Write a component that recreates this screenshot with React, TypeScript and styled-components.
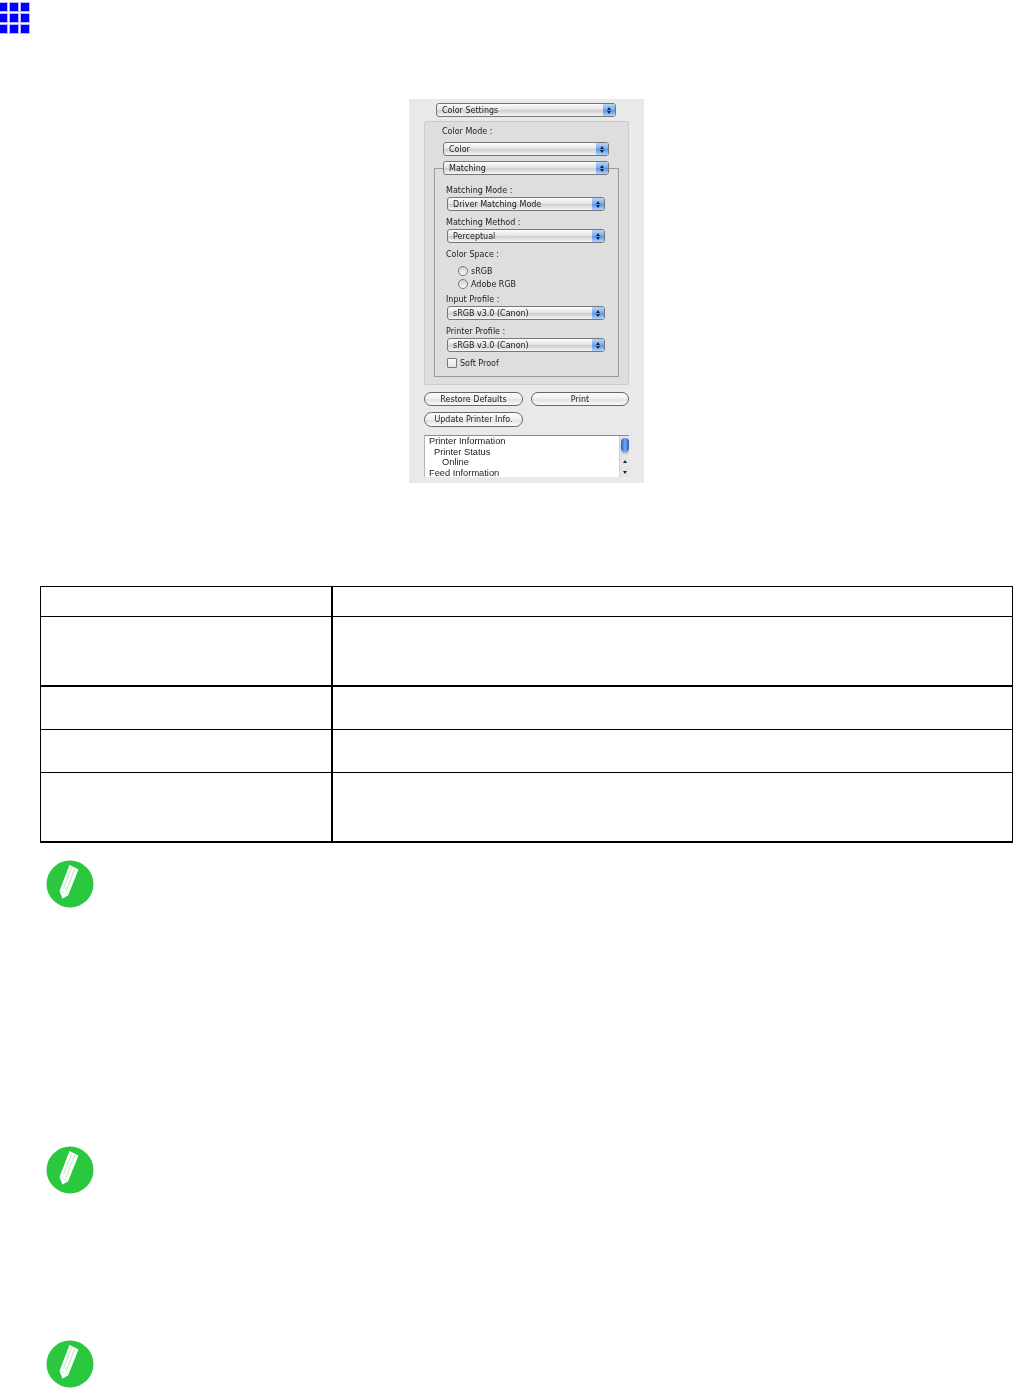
import React from "react"
import styled, { createGlobalStyle } from "styled-components"

const GlobalStyle = createGlobalStyle`
  html, body {
    margin: 0;
    padding: 0;
    background: #fff;
    font-family: "Liberation Sans", Arial, sans-serif;
  }
`

const Page = styled.main`
  width: 1013px;
  height: 1392px;
  overflow: hidden;
  padding-top: 3px;
  box-sizing: border-box;
`

const MenuGrid = styled.div`
  display: grid;
  grid-template-columns: repeat(3, 8px);
  grid-auto-rows: 8px;
  gap: 3px;
  width: 30px;
  margin-left: -1px;
`

const MenuDot = styled.span`
  background: #0000ff;
  box-shadow: 0 0 0 1px #b4b4ff;
`

const Panel = styled.section`
  width: 235px;
  height: 384px;
  box-sizing: border-box;
  margin: 66px 0 0 409px;
  padding-top: 4px;
  background: #e9e9e9;
  color: #222;
  font-family: "DejaVu Sans", sans-serif;
  font-size: 8px;
  filter: blur(0.35px);
`

const SelectBox = styled.div<{ $width: number; $left: number; $top?: number }>`
  display: flex;
  align-items: center;
  justify-content: space-between;
  position: relative;
  width: ${(p) => p.$width}px;
  height: 14px;
  box-sizing: border-box;
  margin: ${(p) => p.$top ?? 1}px 0 0 ${(p) => p.$left}px;
  padding-left: 5px;
  border: 1px solid #777;
  border-radius: 3px;
  background: linear-gradient(#fdfdfd, #e4e4e4 45%, #cfcfcf 55%, #f6f6f6);
  overflow: hidden;
`

const SelectText = styled.span`
  padding-top: 1px;
`

const SelectArrows = styled.span`
  display: flex;
  flex-direction: column;
  align-items: center;
  justify-content: center;
  gap: 1px;
  width: 12px;
  height: 100%;
  background: linear-gradient(#b7d5f7, #73a9ec 50%, #5a97e6 55%, #b3d3f7);
`

const ArrowUp = styled.i`
  width: 0;
  height: 0;
  border-left: 2px solid transparent;
  border-right: 2px solid transparent;
  border-bottom: 3px solid #10233f;
`

const ArrowDown = styled(ArrowUp)`
  border-bottom: 0;
  border-top: 3px solid #10233f;
`

const Group = styled.div`
  width: 205px;
  height: 264px;
  box-sizing: border-box;
  margin: 4px 0 0 15px;
  padding-top: 3px;
  background: #dedede;
  border: 1px solid #cbcbcb;
  border-radius: 2px;
`

const FieldLabel = styled.div<{ $left: number; $top?: number }>`
  height: 12px;
  line-height: 13px;
  margin: ${(p) => p.$top ?? 5}px 0 0 ${(p) => p.$left}px;
  white-space: nowrap;
`

const Frame = styled.div`
  width: 185px;
  height: 209px;
  box-sizing: border-box;
  margin: 12px 0 0 9px;
  border: 1px solid #9a9a9a;
`

const OptionRow = styled.div<{ $left: number; $top?: number }>`
  display: flex;
  align-items: center;
  gap: 3px;
  height: 13px;
  box-sizing: border-box;
  padding-top: 1px;
  margin: ${(p) => p.$top ?? 0}px 0 0 ${(p) => p.$left}px;
`

const Radio = styled.span`
  width: 8px;
  height: 8px;
  border: 1px solid #777;
  border-radius: 50%;
  background: linear-gradient(#d0d0d0, #fafafa);
`

const CheckBox = styled.span`
  width: 8px;
  height: 8px;
  border: 1px solid #777;
  border-radius: 1px;
  background: linear-gradient(#fafafa, #e2e2e2);
`

const ButtonRow = styled.div<{ $top: number }>`
  display: flex;
  gap: 8px;
  margin: ${(p) => p.$top}px 0 0 15px;
`

const PillButton = styled.button<{ $width: number; $height?: number }>`
  width: ${(p) => p.$width}px;
  height: ${(p) => p.$height ?? 14}px;
  padding: 0;
  border: 1px solid #666;
  border-radius: 8px;
  background: linear-gradient(#fdfdfd, #eeeeee 50%, #e2e2e2 55%, #fafafa);
  color: inherit;
  font: inherit;
`

const StatusList = styled.div`
  display: flex;
  width: 205px;
  height: 42px;
  box-sizing: border-box;
  margin: 8px 0 0 15px;
  background: #fff;
  border-top: 1px solid #8c8c8c;
  border-left: 1px solid #b4b4b4;
  overflow: hidden;
  font-family: "Liberation Sans", Arial, sans-serif;
  font-size: 9.3px;
  color: #1c1c1c;
`

const StatusLines = styled.div`
  flex: 1;
`

const StatusLine = styled.div<{ $indent: number }>`
  height: 10.7px;
  line-height: 10.7px;
  padding-left: ${(p) => p.$indent}px;
  white-space: nowrap;
`

const ScrollTrack = styled.div`
  display: flex;
  flex-direction: column;
  align-items: center;
  width: 10px;
  background: #e6e6e6;
  border-left: 1px solid #cfcfcf;
  box-sizing: border-box;
`

const ScrollThumb = styled.div`
  width: 8px;
  height: 14px;
  margin-top: 2px;
  border-radius: 4px;
  background: linear-gradient(90deg, #1f5fc8, #74aaf0 50%, #1f5fc8);
  box-shadow: 0 2px 2px #b5b5b5;
`

const ScrollArrows = styled.div`
  display: flex;
  flex-direction: column;
  align-items: center;
  gap: 8px;
  margin-top: 8px;
`

const SpecTable = styled.table`
  width: 973px;
  margin: 103px 0 0 40px;
  border-collapse: separate;
  border-spacing: 0;
  table-layout: fixed;
  border-top: 1px solid #000;
  border-left: 1px solid #000;
  border-right: 1px solid #000;
  box-sizing: border-box;
`

const SpecRow = styled.tr<{ $height: number }>`
  height: ${(p) => p.$height}px;
`

const SpecCell = styled.td<{ $rule: number; $height: number }>`
  height: ${(p) => p.$height}px;
  box-sizing: border-box;
  padding: 0;
  border-bottom: ${(p) => p.$rule}px solid #000;
  &:first-child {
    width: 292px;
    border-right: 2px solid #000;
  }
`

const NoteList = styled.div`
  display: flex;
  flex-direction: column;
  margin-top: 17px;
`

const Note = styled.div<{ $height: number }>`
  height: ${(p) => p.$height}px;
  padding-left: 46px;
`

const NoteIcon = styled.svg`
  display: block;
  width: 48px;
  height: 48px;
  filter: blur(0.7px);
`

const tableRows = [
  { height: 30, rule: 1 },
  { height: 70, rule: 2 },
  { height: 43, rule: 1 },
  { height: 43, rule: 1 },
  { height: 70, rule: 2 },
]

function Select({ label, width, left, top }: { label: string; width: number; left: number; top?: number }) {
  return (
    <SelectBox $width={width} $left={left} $top={top}>
      <SelectText>{label}</SelectText>
      <SelectArrows>
        <ArrowUp />
        <ArrowDown />
      </SelectArrows>
    </SelectBox>
  )
}

function PencilBadge() {
  return (
    <NoteIcon viewBox="0 0 48 48">
      <circle cx="24" cy="24" r="23.5" fill="#2ac83e" />
      <path d="M23.5 5 L32.5 9.5 L22 35.5 L16.5 38.5 L13.5 31 Z" fill="#ffffff" />
      <path d="M25.5 8 L17.5 29 M28.5 9.5 L20 31" stroke="#c4f0c9" strokeWidth="1.3" fill="none" />
      <path d="M14.5 31 L21.5 35" stroke="#d2f4d6" strokeWidth="1" fill="none" />
    </NoteIcon>
  )
}

export default function App() {
  return (
    <Page>
      <GlobalStyle />
      <MenuGrid>
        {Array.from({ length: 9 }, (_, i) => (
          <MenuDot key={i} />
        ))}
      </MenuGrid>

      <Panel>
        <Select label="Color Settings" width={180} left={27} top={0} />
        <Group>
          <FieldLabel $left={17} $top={0}>Color Mode :</FieldLabel>
          <Select label="Color" width={166} left={18} top={5} />
          <Frame>
            <Select label="Matching" width={166} left={8} top={-8} />
            <FieldLabel $left={11} $top={9}>Matching Mode :</FieldLabel>
            <Select label="Driver Matching Mode" width={158} left={12} />
            <FieldLabel $left={11}>Matching Method :</FieldLabel>
            <Select label="Perceptual" width={158} left={12} />
            <FieldLabel $left={11}>Color Space :</FieldLabel>
            <OptionRow $left={23} $top={4}><Radio />sRGB</OptionRow>
            <OptionRow $left={23}><Radio />Adobe RGB</OptionRow>
            <FieldLabel $left={11} $top={3}>Input Profile :</FieldLabel>
            <Select label="sRGB v3.0 (Canon)" width={158} left={12} />
            <FieldLabel $left={11}>Printer Profile :</FieldLabel>
            <Select label="sRGB v3.0 (Canon)" width={158} left={12} />
            <OptionRow $left={12} $top={4}><CheckBox />Soft Proof</OptionRow>
          </Frame>
        </Group>
        <ButtonRow $top={7}>
          <PillButton $width={99}>Restore Defaults</PillButton>
          <PillButton $width={98}>Print</PillButton>
        </ButtonRow>
        <ButtonRow $top={6}>
          <PillButton $width={99} $height={15}>Update Printer Info.</PillButton>
        </ButtonRow>
        <StatusList>
          <StatusLines>
            <StatusLine $indent={4}>Printer Information</StatusLine>
            <StatusLine $indent={9}>Printer Status</StatusLine>
            <StatusLine $indent={17}>Online</StatusLine>
            <StatusLine $indent={4}>Feed Information</StatusLine>
          </StatusLines>
          <ScrollTrack>
            <ScrollThumb />
            <ScrollArrows>
              <ArrowUp />
              <ArrowDown />
            </ScrollArrows>
          </ScrollTrack>
        </StatusList>
      </Panel>

      <SpecTable>
        <tbody>
          {tableRows.map((row, i) => (
            <SpecRow key={i} $height={row.height}>
              <SpecCell $rule={row.rule} $height={row.height} />
              <SpecCell $rule={row.rule} $height={row.height} />
            </SpecRow>
          ))}
        </tbody>
      </SpecTable>

      <NoteList>
        <Note $height={286}><PencilBadge /></Note>
        <Note $height={194}><PencilBadge /></Note>
        <Note $height={48}><PencilBadge /></Note>
      </NoteList>
    </Page>
  )
}
